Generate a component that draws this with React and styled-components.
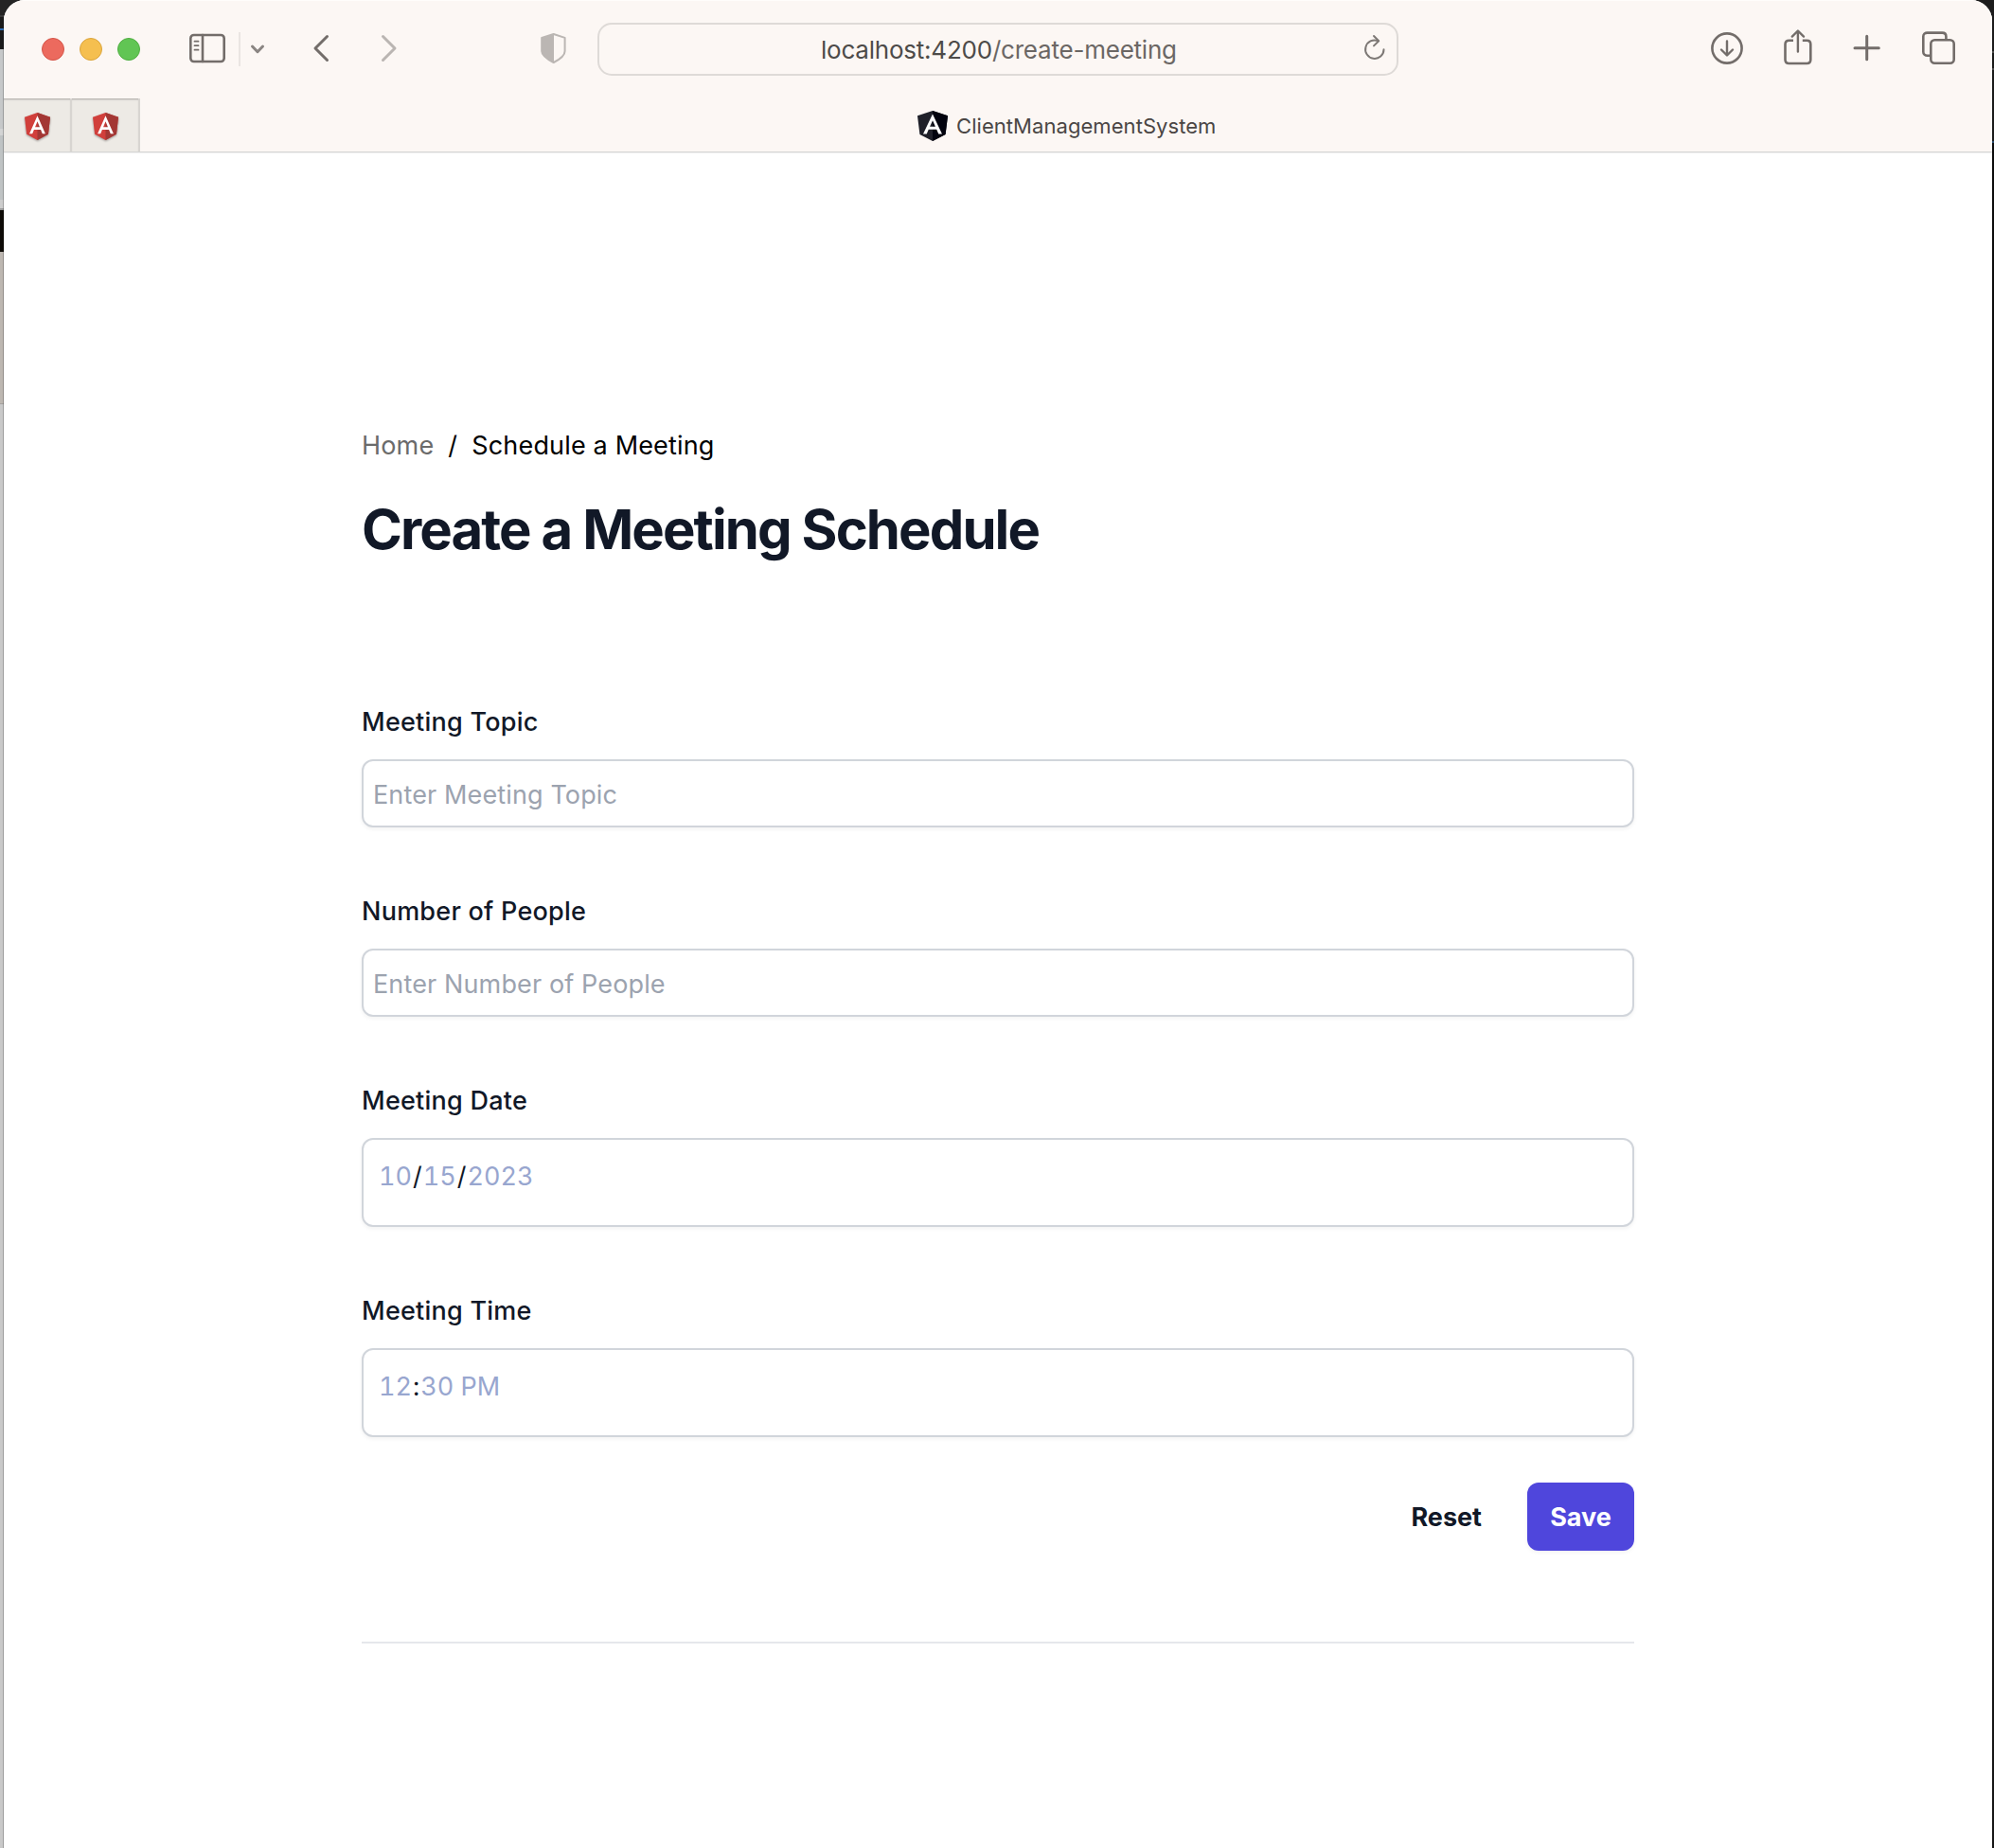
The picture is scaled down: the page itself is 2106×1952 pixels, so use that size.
import React from "react";
import styled, { createGlobalStyle } from "styled-components";

const Global = createGlobalStyle`
  *, *::before, *::after { box-sizing: border-box; }
  html, body { margin: 0; padding: 0; }
  body { font-family: Inter, "Liberation Sans", sans-serif; overflow: hidden; }
`;

const Desktop = styled.div`
  width: 2106px;
  height: 1952px;
  padding: 0 2px 0 4px;
  overflow: hidden;
  background:
    linear-gradient(
      to bottom,
      #1c1c1c 0 54px, #4a4a4a 54px 56px, #1a1a1a 56px 72px, #4a4a4a 72px 74px,
      #1a1a1a 74px 149px, #27496b 149px 151px, #0c0c0c 151px 500px, #161616 100%
    ) right top / 40px 100% no-repeat,
    linear-gradient(
      to bottom,
      #242424 0 16px, #3a3a3a 16px 18px, #1b1b1b 18px 30px, #2f6db5 30px 32px,
      #1b1b1b 32px 52px, #c6c8c9 52px 136px, #d3d4d4 136px 143px, #bfc3c4 143px 211px,
      #cdcdcd 211px 220px, #9b9b9b 220px 222px, #0e0b07 222px 266px, #bdb7b1 266px 426px,
      #a5a29f 426px 427px, #c9c9c9 427px
    );
`;

const Window = styled.div`
  width: 2100px;
  height: 1952px;
  display: flex;
  flex-direction: column;
  background: #fff;
  border-radius: 22px 22px 0 0;
  overflow: hidden;
  box-shadow: -1px 0 0 rgba(0, 0, 0, 0.22);
`;

const Chrome = styled.header`
  height: 161px;
  flex: none;
  display: flex;
  flex-direction: column;
  background: #fcf7f4;
  border-top: 1px solid #fffdfb;
  border-bottom: 1px solid #d6d6d5;
  box-shadow: 0 1px 0 #efefef;
`;

const Toolbar = styled.div`
  height: 103px;
  display: flex;
  align-items: flex-start;
  padding-left: 40px;
`;

const Lights = styled.div`
  display: flex;
  gap: 16px;
  padding-top: 39px;
`;

const Light = styled.span`
  width: 24px;
  height: 24px;
  border-radius: 50%;
  background: ${(p) => p.$fill};
  border: 1px solid ${(p) => p.$edge};
`;

const Icon = styled.svg`
  display: block;
  flex: none;
  width: ${(p) => p.$w}px;
  height: ${(p) => p.$h}px;
  margin-top: ${(p) => p.$top}px;
  margin-left: ${(p) => p.$left}px;
  fill: none;
  stroke: ${(p) => p.$color || "#736d6a"};
  stroke-width: ${(p) => p.$stroke || 2.6};
  stroke-linecap: round;
  stroke-linejoin: round;
`;

const Divider = styled.span`
  width: 2px;
  height: 36px;
  margin: 33px 0 0 13px;
  background: #eae5e2;
`;

const AddressBar = styled.div`
  width: 846px;
  height: 56px;
  margin: 23px 0 0 31px;
  display: flex;
  align-items: center;
  border: 2px solid #dedad7;
  border-radius: 15px;
`;

const Url = styled.span`
  flex: none;
  width: 575px;
  padding: 2px 0 0 234px;
  font-size: 26px;
  line-height: 40px;
  letter-spacing: -0.22px;
  white-space: nowrap;
  color: #4d4b49;
`;

const UrlPath = styled.span`
  color: #6b6765;
`;

const TabStrip = styled.div`
  height: 56px;
  display: flex;
`;

const PinnedTab = styled.div`
  width: 72px;
  height: 56px;
  display: flex;
  justify-content: center;
  align-items: center;
  padding-top: 2px;
  background: #edeae5;
  border-right: 2px solid #d8d5d1;
  box-shadow: inset 0 2px 2px -1px rgba(0, 0, 0, 0.3);
`;

const ActiveTab = styled.div`
  display: flex;
  align-items: center;
  padding: 2px 0 0 821px;
  gap: 9px;
`;

const TabTitle = styled.span`
  font-size: 22px;
  line-height: 28px;
  letter-spacing: 0.06px;
  color: #4a4644;
`;

const Shield = styled.svg`
  display: block;
  flex: none;
  width: ${(p) => p.$w}px;
  height: ${(p) => p.$h}px;
  filter: ${(p) => (p.$shadow ? "drop-shadow(0 1px 1px rgba(0,0,0,0.35))" : "none")};
`;

const Page = styled.main`
  width: 1344px;
  margin-left: 378px;
  padding-top: 286px;
  display: flex;
  flex-direction: column;
`;

const Breadcrumb = styled.nav`
  display: flex;
  font-size: 27px;
  line-height: 48px;
  letter-spacing: 0.16px;
  color: #000;
`;

const Crumb = styled.span`
  color: ${(p) => (p.$muted ? "#6b6b6b" : "#000")};
`;

const Slash = styled.span`
  width: 40px;
  text-align: center;
`;

const Title = styled.h1`
  margin: 28px 0 144px;
  font-size: 58px;
  line-height: 72px;
  font-weight: 700;
  letter-spacing: -1.9px;
  color: #111827;
`;

const Form = styled.form`
  display: flex;
  flex-direction: column;
  gap: 65px;
`;

const Field = styled.div`
  display: flex;
  flex-direction: column;
  gap: 15px;
`;

const Label = styled.label`
  font-size: 27px;
  line-height: 48px;
  font-weight: 500;
  letter-spacing: 0.24px;
  color: #111827;
`;

const control = `
  border: 2px solid #d1d5db;
  border-radius: 12px;
  background: #fff;
  box-shadow: 0 2px 4px rgba(0, 0, 0, 0.05);
  font-family: inherit;
  font-size: 27px;
  outline: none;
`;

const TextInput = styled.input`
  ${control}
  width: 100%;
  height: 72px;
  padding: 2px 10px 0;
  letter-spacing: 0.13px;
  color: #111827;
  &::placeholder { color: #9ca3af; opacity: 1; }
`;

const PickerInput = styled.div`
  ${control}
  height: 94px;
  padding: 19px 15px 0;
  line-height: 40px;
  font-variant-numeric: tabular-nums;
  color: #111827;
`;

const Part = styled.span`
  padding: 0 1px;
  color: #98a6cf;
`;

const Actions = styled.div`
  display: flex;
  justify-content: flex-end;
  align-items: center;
  gap: 48px;
  margin-top: 48px;
`;

const Button = styled.button`
  border: 0;
  border-radius: 12px;
  font-family: inherit;
  font-size: 27px;
  line-height: 40px;
  font-weight: 700;
  height: 72px;
  padding: ${(p) => (p.$primary ? "2px 0 0" : "2px 0 0")};
  width: ${(p) => (p.$primary ? "113px" : "auto")};
  color: ${(p) => (p.$primary ? "#fff" : "#111827")};
  background: ${(p) => (p.$primary ? "#4f46dc" : "transparent")};
  box-shadow: ${(p) => (p.$primary ? "0 2px 4px rgba(0,0,0,0.05)" : "none")};
`;

const Rule = styled.hr`
  width: 100%;
  height: 2px;
  margin: 96px 0 0;
  border: 0;
  background: #e5e7eb;
`;

function AngularShield({ width, height, left, right, shadow }) {
  return (
    <Shield
      $w={width}
      $h={height}
      $shadow={shadow}
      viewBox="31.9 30 186.2 200"
      preserveAspectRatio="none"
    >
      <path fill={left} d="M125 30 31.9 63.2l14.2 123.1L125 230l78.9-43.7 14.2-123.1z" />
      <path fill={right} d="M125 30v200l78.9-43.7 14.2-123.1z" />
      <path
        fill="#fff"
        d="M125 52.1 66.8 182.6h21.7l11.7-29.2h49.4l11.7 29.2H183L125 52.1zm17 83.3h-34l17-40.9z"
      />
    </Shield>
  );
}

export default function App() {
  return (
    <Desktop>
      <Global />
      <Window>
        <Chrome>
          <Toolbar>
            <Lights>
              <Light $fill="#ec6a5e" $edge="#d55548" />
              <Light $fill="#f5bf4f" $edge="#dba53c" />
              <Light $fill="#61c554" $edge="#4fae40" />
            </Lights>
            <Icon $w={40} $h={32} $top={34} $left={51} viewBox="0 0 40 32">
              <rect x="2.3" y="2" width="35.4" height="28" rx="3.5" />
              <path d="M15 2v28" />
              <path strokeWidth="1.8" d="M6.5 8.7h4M6.5 13.2h4M6.5 17.7h4" />
            </Icon>
            <Divider />
            <Icon $w={16} $h={12} $top={45} $left={10} $color="#8a8582" $stroke={3} viewBox="0 0 16 12">
              <path d="M2.5 3 8 8.7 13.5 3" />
            </Icon>
            <Icon $w={20} $h={30} $top={35} $left={49} $stroke={3} viewBox="0 0 20 30">
              <path d="M16.5 2.5 4 15l12.5 12.5" />
            </Icon>
            <Icon $w={20} $h={30} $top={35} $left={52} $color="#bab5b2" $stroke={3} viewBox="0 0 20 30">
              <path d="M3.5 2.5 16 15 3.5 27.5" />
            </Icon>
            <Icon $w={30} $h={34} $top={33} $left={149} $color="#bbb6b3" $stroke={2} viewBox="0 0 30 34">
              <path d="M14.700 2 26.600 5.900v14c0 5.200-6.300 9.200-11.900 12.100C9.300 29.100 2.200 25.100 2.200 19.900V5.900z" />
              <path fill="#bbb6b3" stroke="none" d="M15 2 2 6v13.900C2 25.200 9.500 29.400 15 32z" />
            </Icon>
            <AddressBar>
              <Url>
                localhost:4200<UrlPath>/create-meeting</UrlPath>
              </Url>
              <Icon $w={24} $h={30} $top={-4} $left={232} $color="#7d7875" $stroke={2} viewBox="0 0 24 30">
                <path d="M21.500 17.200A9.700 9.700 0 1 1 15.500 8.200" />
                <path d="M11 3l5.200 5.200L11 13.400" />
              </Icon>
            </AddressBar>
            <Icon $w={36} $h={36} $top={32} $left={329} viewBox="0 0 36 36">
              <circle cx="18" cy="18" r="15.600" />
              <path strokeWidth="2.400" d="M18 10.500v14.300M12 19.500l6 6 6-6" />
            </Icon>
            <Icon $w={32} $h={40} $top={29} $left={41} viewBox="0 0 32 40">
              <path strokeLinecap="butt" d="M11 12.700H6.500c-2.500 0-4 1.500-4 4V33c0 2.500 1.500 4 4 4h18.800c2.500 0 4-1.500 4-4V16.700c0-2.500-1.500-4-4-4h-4.500" />
              <path strokeWidth="2.400" d="M15.900 24.500V3M9.800 8.600l6.100-6.100 6.100 6.100" />
            </Icon>
            <Icon $w={30} $h={30} $top={35} $left={42} $stroke={3} viewBox="0 0 30 30">
              <path d="M2 14.700h25.300M14.700 2.300v24.500" />
            </Icon>
            <Icon $w={38} $h={38} $top={31} $left={42} viewBox="0 0 38 38">
              <path strokeLinecap="butt" d="M10 26.700H6.500c-2.500 0-4.200-1.500-4.200-4V6.600c0-2.500 1.700-4 4.200-4H22.400c2.500 0 4 1.500 4 4v3.500" />
              <rect x="10.300" y="10.300" width="24.400" height="24.400" rx="4" />
            </Icon>
          </Toolbar>
          <TabStrip>
            <PinnedTab>
              <AngularShield width={27} height={29} left="#d13f3b" right="#a33734" shadow />
            </PinnedTab>
            <PinnedTab>
              <AngularShield width={27} height={29} left="#d13f3b" right="#a33734" shadow />
            </PinnedTab>
            <ActiveTab>
              <AngularShield width={32} height={32} left="#1f2029" right="#02030e" />
              <TabTitle>ClientManagementSystem</TabTitle>
            </ActiveTab>
          </TabStrip>
        </Chrome>
        <Page>
          <Breadcrumb>
            <Crumb $muted>Home</Crumb>
            <Slash>/</Slash>
            <Crumb>Schedule a Meeting</Crumb>
          </Breadcrumb>
          <Title>Create a Meeting Schedule</Title>
          <Form>
            <Field>
              <Label>Meeting Topic</Label>
              <TextInput placeholder="Enter Meeting Topic" />
            </Field>
            <Field>
              <Label>Number of People</Label>
              <TextInput placeholder="Enter Number of People" />
            </Field>
            <Field>
              <Label>Meeting Date</Label>
              <PickerInput>
                <Part>10</Part>/<Part>15</Part>/<Part>2023</Part>
              </PickerInput>
            </Field>
            <Field>
              <Label>Meeting Time</Label>
              <PickerInput>
                <Part>12</Part>:<Part>30 PM</Part>
              </PickerInput>
            </Field>
          </Form>
          <Actions>
            <Button type="button">Reset</Button>
            <Button type="button" $primary>Save</Button>
          </Actions>
          <Rule />
        </Page>
      </Window>
    </Desktop>
  );
}
